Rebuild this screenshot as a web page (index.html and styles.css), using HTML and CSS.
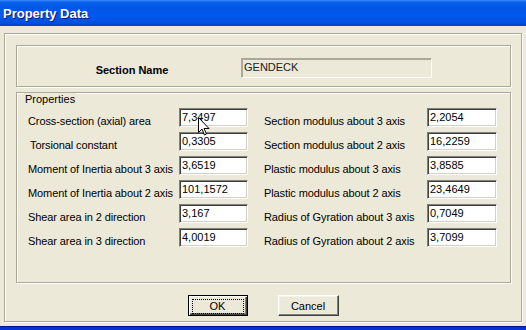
FILE: index.html
```html
<!DOCTYPE html>
<html lang="en">
<head>
  <meta charset="UTF-8" />
  <title>Property Data</title>
  <link rel="stylesheet" href="styles.css">
</head>
<body>
  <div class="window">
    <div class="titlebar">
      <span class="title">Property Data</span>
    </div>

    <div class="client">
      <div class="frame">
        <div class="group name-group">
          <span class="name-label">Section Name</span>
          <div class="field name-field">GENDECK</div>
        </div>

        <div class="group props">
          <span class="legend">Properties</span>
          <div class="props-grid">
            <span class="lbl">Cross-section (axial) area</span>
            <div class="field has-cursor">7,3497
              <svg class="cursor" width="12" height="19" viewBox="0 0 12 19">
                <path d="M0.5 0.5 L0.5 15.5 L4 12 L6.5 18 L8.5 17 L6 11.5 L11 11.5 Z" fill="#fff" stroke="#000" stroke-width="1"/>
              </svg>
            </div>
            <span class="lbl r">Section modulus about 3 axis</span>
            <div class="field">2,2054</div>

            <span class="lbl i">Torsional constant</span>
            <div class="field">0,3305</div>
            <span class="lbl r">Section modulus about 2 axis</span>
            <div class="field">16,2259</div>

            <span class="lbl">Moment of Inertia about 3 axis</span>
            <div class="field">3,6519</div>
            <span class="lbl r">Plastic modulus about 3 axis</span>
            <div class="field">3,8585</div>

            <span class="lbl">Moment of Inertia about 2 axis</span>
            <div class="field">101,1572</div>
            <span class="lbl r">Plastic modulus about 2 axis</span>
            <div class="field">23,4649</div>

            <span class="lbl">Shear area in 2 direction</span>
            <div class="field">3,167</div>
            <span class="lbl r">Radius of Gyration about 3 axis</span>
            <div class="field">0,7049</div>

            <span class="lbl">Shear area in 3 direction</span>
            <div class="field">4,0019</div>
            <span class="lbl r">Radius of Gyration about 2 axis</span>
            <div class="field">3,7099</div>
          </div>
        </div>

        <div class="buttons">
          <button class="btn default"><span class="focus">OK</span></button>
          <button class="btn">Cancel</button>
        </div>
      </div>
    </div>

    <div class="bottom-edge"></div>
  </div>
</body>
</html>
```

FILE: styles.css
```css
body {
  margin: 0;
  background-color: #ece9d8;
  font-family: "Liberation Sans", Arial, sans-serif;
  font-size: 11px;
  color: #000;
}

.window {
  width: 526px;
  height: 330px;
  display: flex;
  flex-direction: column;
  background-color: #ece9d8;
  overflow: hidden;
}

.titlebar {
  height: 26px;
  flex: none;
  display: flex;
  align-items: center;
  padding-left: 3px;
  background: linear-gradient(to bottom, #3a8cff 0, #0a62ec 2px, #0056e6 7px, #0058ee 55%, #0052e2 85%, #0043cc 100%);
}

.title {
  color: #fff;
  font-weight: bold;
  font-size: 13px;
  text-shadow: 1px 1px 0 #0a1a7a;
  margin-top: 1px;
}

.client {
  flex: 1;
  padding: 7px 0 0 4px;
}

.frame {
  width: 518px;
  height: 289px;
  box-sizing: border-box;
  border: 1px solid #aca899;
  box-shadow: inset 1px 1px #fff, 1px 1px #fff;
  padding: 11px 0 0 11px;
}

.group {
  width: 495px;
  box-sizing: border-box;
  border: 1px solid #aca899;
  box-shadow: inset 1px 1px #fff, 1px 1px #fff;
}

.name-group {
  height: 42px;
  display: flex;
  align-items: flex-start;
  padding-top: 12px;
}

.name-label {
  width: 230px;
  text-align: center;
  font-weight: bold;
  margin-top: 6px;
}

.field {
  box-sizing: border-box;
  height: 19px;
  padding: 2px 2px 0;
  line-height: 13px;
  background-color: #fff;
  border: 1px solid;
  border-color: #808080 #fff #fff #808080;
  box-shadow: inset 1px 1px #404040, inset -1px -1px #d4d0c8;
  white-space: nowrap;
}

.name-field {
  width: 191px;
  height: 20px;
  margin-left: -6px;
  background-color: #ece9d8;
  color: #222;
  border-color: #aca899 #fff #fff #aca899;
  box-shadow: inset 1px 1px #aca899, inset -1px -1px #ece9d8;
}

.props {
  height: 191px;
  margin-top: 5px;
  padding-left: 11px;
}

.legend {
  display: inline-block;
  margin: -1px 0 0 -4px;
  padding: 0 1px;
  line-height: 13px;
  background-color: #ece9d8;
}

.props-grid {
  display: grid;
  grid-template-columns: 151px 69px 179px 70px;
  grid-auto-rows: 19px;
  row-gap: 5px;
  margin-top: 2px;
}

.lbl {
  padding-top: 7px;
  line-height: 13px;
  white-space: nowrap;
  letter-spacing: -0.1px;
}

.lbl.i {
  padding-left: 2px;
}

.lbl.r {
  padding-left: 16px;
}

.has-cursor {
  position: relative;
}

.cursor {
  position: absolute;
  left: 18px;
  top: 8px;
}

.buttons {
  display: flex;
  justify-content: center;
  gap: 30px;
  margin-top: 12px;
  padding-right: 11px;
}

.btn {
  box-sizing: border-box;
  width: 61px;
  height: 21px;
  padding: 0;
  font-family: "Liberation Sans", Arial, sans-serif;
  font-size: 11px;
  color: #000;
  background-color: #ece9d8;
  border: 1px solid;
  border-color: #fff #404040 #404040 #fff;
  box-shadow: inset -1px -1px #808080, inset 1px 1px #f4f2e8;
}

.btn.default {
  width: 60px;
  border: 1px solid #000;
  box-shadow: inset 1px 1px #fff, inset -1px -1px #404040, inset -2px -2px #808080;
  padding: 3px;
}

.focus {
  display: block;
  height: 13px;
  line-height: 12px;
  border: 1px dotted #000;
}

.bottom-edge {
  height: 3px;
  flex: none;
  background-color: #0831d9;
  border-top: 1px solid #00138c;
}
```
